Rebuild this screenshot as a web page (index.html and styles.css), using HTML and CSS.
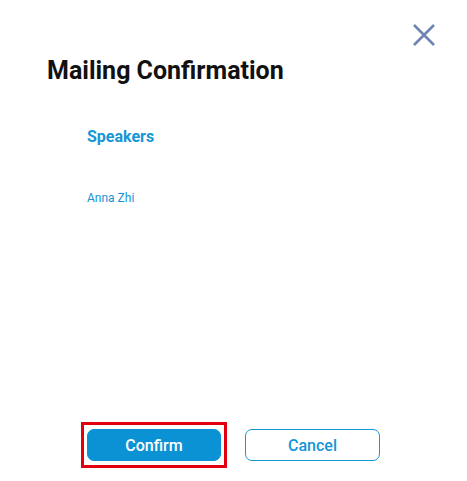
FILE: index.html
```html
<!DOCTYPE html>
<html lang="en">
<head>
<meta charset="utf-8">
<title>Mailing Confirmation</title>
<link rel="stylesheet" href="styles.css">
</head>
<body>
<div class="dialog">
  <div class="top-bar">
    <button class="close" aria-label="Close">
      <svg width="24" height="24" viewBox="0 0 24 24" fill="none" stroke="currentColor" stroke-width="2.6" stroke-linecap="butt">
        <path d="M2 2 L22 22 M22 2 L2 22"/>
      </svg>
    </button>
  </div>
  <h1 class="title">Mailing Confirmation</h1>
  <div class="content">
    <h2 class="section-title">Speakers</h2>
    <p class="speaker">Anna Zhi</p>
  </div>
  <div class="footer">
    <span class="focus-ring"><button class="btn btn-primary">Confirm</button></span>
    <button class="btn btn-secondary">Cancel</button>
  </div>
</div>
</body>
</html>
```
FILE: styles.css
```css
* { box-sizing: border-box; }
html, body {
  margin: 0;
  padding: 0;
  background: #ffffff;
}
body {
  font-family: Roboto, "Liberation Sans", Arial, sans-serif;
}
.dialog {
  display: flex;
  flex-direction: column;
  min-height: 100vh;
  padding-bottom: 13px;
}
.top-bar {
  display: flex;
  justify-content: flex-end;
  padding: 23px 31px 0 0;
}
.close {
  display: block;
  width: 24px;
  height: 24px;
  padding: 0;
  border: 0;
  background: none;
  color: #6f84b3;
  cursor: pointer;
}
.close svg { display: block; }
.title {
  margin: 10px 0 0 47px;
  font-size: 25px;
  line-height: 28px;
  font-weight: 700;
  color: #111111;
}
.content {
  padding-left: 87px;
}
.section-title {
  margin: 42px 0 0;
  font-size: 16px;
  line-height: 20px;
  font-weight: 700;
  color: #1596d6;
}
.speaker {
  margin: 43px 0 0;
  font-size: 12px;
  line-height: 16px;
  color: #1596d6;
}
.footer {
  margin-top: auto;
  display: flex;
  align-items: center;
  gap: 18px;
  padding-left: 81px;
}
.focus-ring {
  display: flex;
  padding: 4px 3px;
  border: 3px solid #e2000f;
}
.btn {
  height: 32px;
  border-radius: 7px;
  font-family: inherit;
  font-size: 16px;
  font-weight: 500;
  cursor: pointer;
}
.btn-primary {
  width: 134px;
  background: #0a92d4;
  border: 1px solid #0a92d4;
  color: #ffffff;
}
.btn-secondary {
  width: 135px;
  background: #ffffff;
  border: 1px solid #1596d6;
  color: #1596d6;
}
```
